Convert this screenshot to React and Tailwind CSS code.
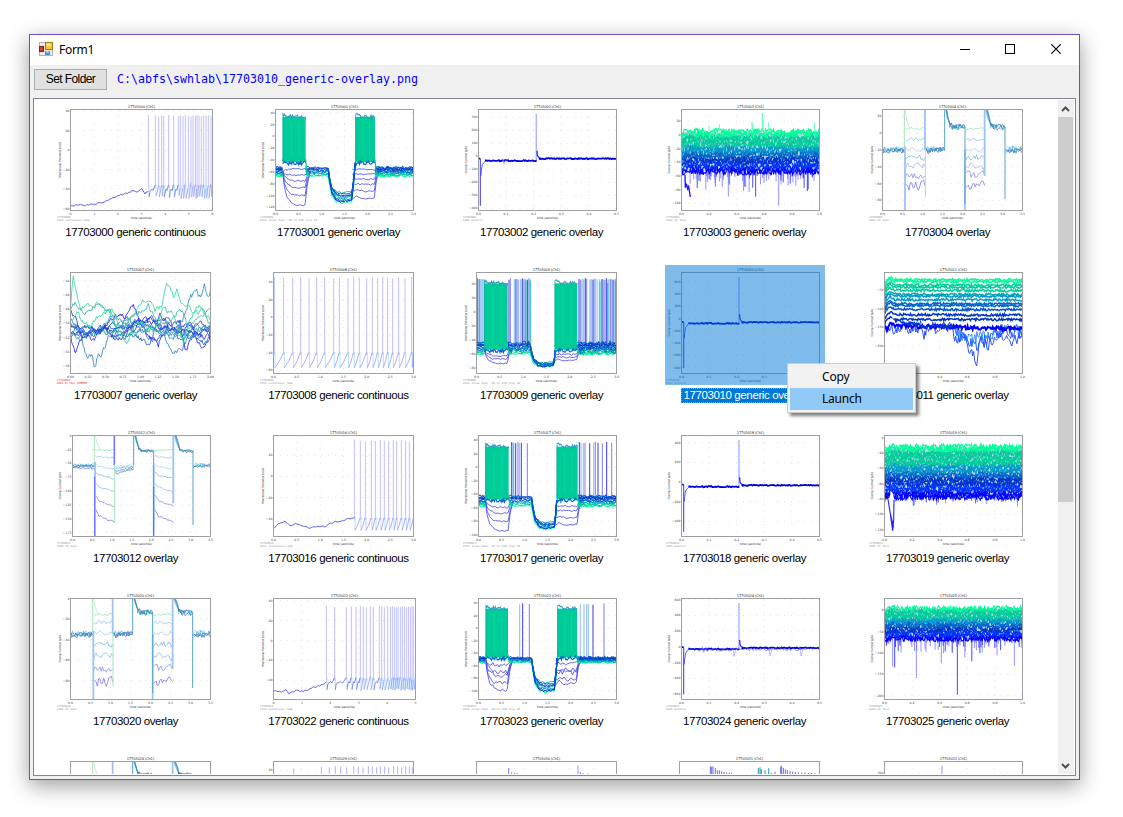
import React from "react";

const SKY = ["#0000ff", "#0033ff", "#0033cc", "#0066cc", "#0099cc", "#00cc99", "#00cc99", "#00ff99"];

// Small seeded generator, so that every thumbnail is the same on each render.
function rng(seed) {
  let a = Math.imul(seed + 11, 2654435761);
  return () => {
    a = (a + 0x6d2b79f5) | 0;
    let t = Math.imul(a ^ (a >>> 15), 1 | a);
    t = (t + Math.imul(t ^ (t >>> 7), 61 | t)) ^ t;
    return ((t ^ (t >>> 14)) >>> 0) / 4294967296;
  };
}

// Path through the knots, sampled every `step` units with noise added.
// `hold` is the share of each sample's noise that carries over to the next.
function noisy(knots, amp, step, seed, hold = 0) {
  const r = rng(seed);
  let d = "";
  let e = 0;
  for (let i = 0; i < knots.length - 1; i++) {
    const [x0, y0] = knots[i];
    const [x1, y1] = knots[i + 1];
    const n = Math.max(1, Math.round(Math.abs(x1 - x0) / step));
    for (let k = 0; k < n; k++) {
      const t = k / n;
      e = e * hold + (r() - 0.5) * 2 * amp;
      d += `${d ? "L" : "M"}${(x0 + (x1 - x0) * t).toFixed(1)} ${(y0 + (y1 - y0) * t + e).toFixed(1)}`;
    }
  }
  const last = knots[knots.length - 1];
  return `${d}L${last[0]} ${last[1]}`;
}

function Line({ d, c = "#3333ff", w = 2.4, o = 1 }) {
  return <path d={d} fill="none" stroke={c} strokeWidth={w} opacity={o} />;
}

function Trace({ p, a = 2, s = 4, seed = 1, hold = 0, ...rest }) {
  return <Line d={noisy(p, a, s, seed, hold)} {...rest} />;
}

function Firing({ pre, xs, top, base, peak, r, jitter = 0 }) {
  const g = rng(xs.length);
  const j = xs.map(() => [(g() - 0.5) * jitter, (g() - 0.5) * jitter]);
  const saw = xs
    .map((x, i) => {
      const n = i + 1 < xs.length ? xs[i + 1] : r;
      if (jitter && n - x > 12) return "";
      const b = base + j[i][0] * 0.5;
      const p = peak + j[i][1];
      return `M${x + 2} ${b}L${x + (n - x) * 0.55} ${(b + p) / 2 + 4}L${n - 1} ${p + 2}`;
    })
    .join("");
  const curve = xs
    .map((x, i) => {
      const n = i + 1 < xs.length ? xs[i + 1] : r;
      if (!jitter || n - x <= 12) return "";
      return `M${x + 2} ${base}L${x + 5} ${base - 18}L${x + (n - x) * 0.5} ${peak + 12}L${x + (n - x) * 0.7} ${peak + 16}L${n - 1} ${peak}`;
    })
    .join("");
  return (
    <>
      <Line d={xs.map((x, i) => `M${x} ${peak + 8}V${top + ((i * 7) % 5)}`).join("")} c="#c0c0ff" w={3} />
      <Line d={xs.map((x, i) => `M${x + 2} ${base + j[i][0] * 0.5}V${peak}`).join("")} c="#a9d8ff" w={2.4} />
      <Line d={saw} c="#8686f5" w={2} />
      <Line d={curve} c="#5c5cec" w={2.2} />
      {pre && <Trace p={pre} a={2.6} s={4} hold={0.4} seed={pre[0][0]} c="#4848e8" w={2.6} />}
    </>
  );
}

function Memtest({ l, r, x1, x2, left, low, mid, right, top, dips = [] }) {
  return (
    <>
      <Line d={`M${x2} ${mid}V${top}`} c="#b3b3ff" w={4.5} />
      <Line d={`M${x1} ${left}V${low}`} c="#4a4aff" w={3.4} />
      <Line d={`M${x1 + 2} ${low - 90}L${x1 + 3} ${mid + 30}L${x1 + 6} ${mid + 12}L${x1 + 14} ${mid + 2}L${x1 + 30} ${mid}`} c="#3333ff" />
      <Trace p={[[l, left], [x1, left]]} a={1} c="#0000e0" w={5} />
      <Trace p={[[x1 + 14, mid], [x2 + 1, mid]]} a={1.6} s={3} c="#0000e0" w={5.4} />
      <Line d={`M${x2 + 2} ${right - 24}L${x2 + 3} ${right - 10}L${x2 + 7} ${right - 4}L${x2 + 16} ${right}`} c="#1111ff" w={3.4} />
      <Trace p={[[x2 + 8, right], [r, right]]} a={1.6} s={3} seed={4} c="#0000e0" w={5.4} />
      {dips.map(([x, y]) => (
        <Line key={x} d={`M${x - 3} ${right}L${x} ${y}L${x + 5} ${right + 6}L${x + 14} ${right}`} c="#9a9aff" w={2} />
      ))}
    </>
  );
}

function Steps({ x, base, block, arcs, dip, spikes = [], lightSpikes = [], tall, rough = 2.5, wash = [] }) {
  const [a, b, c, d, e, f, g, h] = x;
  const out = [];
  const n = 9;
  const colors = ["#00ff99", "#00cc99", "#00cc99", "#0099cc", "#0066cc", "#0066cc", "#0033cc", "#0033cc", "#0066cc"];
  wash.forEach(([p, q], i) => out.push(<rect key={`wash${i}`} x={p} y={tall + 4} width={q - p} height={base[0] - tall} fill="#9cc6f0" opacity="0.6" />));
  arcs.forEach((y, i) => {
    const m = (base[0] + base[1]) / 2;
    const dy = y - m;
    out.push(
      <Trace key={`l${i}`} p={[[b, m], [b + 5, m + dy * 0.45], [b + 13, m + dy * 0.75], [b + 26, m + dy * 0.93], [b + 40, y], [c - 2, y], [c + 5, m + dy * 0.4], [c + 14, m]]} a={rough} s={5} seed={i + 3} c="#4242ee" w={2.4} />,
      <Trace key={`r${i}`} p={[[e, y - dy * 0.2], [e + 12, m + dy * 0.75], [f + 30, m + dy * 0.82], [g - 2, m + dy * 0.8], [g + 4, m + dy * 0.3], [g + 12, m]]} a={rough} s={5} seed={i + 13} c="#4242ee" w={2.4} />
    );
  });
  spikes.forEach((s, i) => out.push(<Line key={`s${s}`} d={`M${s} ${base[0] + 10}V${tall + (i % 3) * 2}`} c={i % 2 ? "#8484fa" : "#4646e6"} w={3.2} />));
  lightSpikes.forEach((s) => out.push(<Line key={`t${s}`} d={`M${s} ${base[0] + 10}V${tall + 3}`} c="#9cc6f0" w={3.6} />));
  for (let i = 0; i < n; i++) {
    const y = base[1] - ((base[1] - base[0]) * i) / (n - 1);
    const q = dip[1] - ((dip[1] - dip[0]) * ((i * 4) % n)) / (n - 1);
    const col = colors[i];
    out.push(
      <Trace key={`b${i}`} p={[[a, y], [b, y]]} a={3} s={3} seed={i} c={col} w={3.2} />,
      <Trace key={`c${i}`} p={[[c, y - 4], [c + 6, y], [d, y], [d + 4, y + (q - y) * 0.35], [d + 11, y + (q - y) * 0.75], [d + 24, y + (q - y) * 0.95], [d + 40, q], [e - 2, q - 3], [e + 2, y + (q - y) * 0.6], [f, block[1]]]} a={2.8} s={4} seed={i + 20} c={col} w={3} />,
      <Trace key={`d${i}`} p={[[g, y], [h, y]]} a={3.2} s={3} seed={i + 40} c={col} w={3.2} />
    );
  }
  [[b, c], [f, g]].forEach(([p, q], i) => {
    out.push(
      <rect key={`k${i}`} x={p} y={block[0] + 6} width={q - p} height={block[1] - block[0] - 8} fill="#00cc99" />,
      <Trace key={`u${i}`} p={[[p, block[0] - 2], [p + 20, block[0] + 4], [q, block[0] + 6]]} a={5} s={3} seed={i + 60} c="#2d9fc4" w={3.4} />,
      <Trace key={`v${i}`} p={[[p, block[1]], [q, block[1]]]} a={7} s={2.5} seed={i + 70} c="#0066cc" w={3.4} />,
      <Trace key={`w${i}`} p={[[p, block[1] - 12], [q, block[1] - 12]]} a={6} s={2.5} seed={i + 80} c="#00cc99" w={5} />,
      <Line key={`x${i}`} d={[0.38, 0.72].map((t) => `M${p + (q - p) * t} ${block[1] - 22}V${block[0] + 22}`).join("")} c="#10e49a" w={1.6} />,
      <Line key={`y${i}`} d={`M${p + 1} ${block[1]}V${block[0]}`} c="#159fb0" w={2.4} />,
      <Line key={`z${i}`} d={`M${q} ${block[1] - 10}L${q + 4} ${base[1] - 6}L${q + 12} ${base[1]}`} c="#00cc99" w={3.4} />
    );
  });
  return out;
}

function Clamp({ x, top, bottom, base, high, steps, drift = 0, post = 0, amp = 9 }) {
  const [a, b, c, d, e, f, g, h] = x;
  const cols = ["#99e6b8", "#9ccbee", "#b4d3ea", "#86bbee", "#98c0f4", "#8f94ee", "#7e7cec"];
  const out = [];
  steps.forEach((y, i) => {
    const dr = drift * i * 1.2;
    const rough = drift ? 2.5 : 4 + i * 1.6;
    out.push(
      <Trace key={`p${i}`} p={[[b + 3, y - dr], [b + 14, y - dr * 0.3], [c, y + dr * 0.4]]} a={rough} s={4} hold={0.3} seed={i * 7 + 5} c={cols[i]} w={2.5} />,
      <Trace key={`q${i}`} p={[[e + 3, y - dr], [e + 14, y - dr * 0.3], [f, y + dr * 0.4]]} a={rough} s={4} hold={0.3} seed={i * 7 + 77} c={cols[i]} w={2.5} />
    );
  });
  out.push(<Line key="g" d={`M${b + 2} ${top}L${b + 7} ${steps[0] - 24}L${b + 17} ${steps[0]}`} c="#a9e9bd" w={2} />);
  ["#a9d5f5", "#4fb2d6", "#5f72d8", "#2f93a8"].forEach((col, i) => {
    const y = base + (i - 1.5) * 2;
    const k = post * (i + 1) * 0.25;
    out.push(
      <Trace key={`a${i}`} p={[[a, y], [b, y + 1]]} a={amp} s={3.4} seed={i + 1} c={col} w={2.4} />,
      <Trace key={`b${i}`} p={[[c + 2, y + k], [d, y + k * 0.4]]} a={post ? 2 : amp} s={3.4} seed={i + 7} c={col} w={2.4} />,
      <Line key={`s${i}`} d={`M${d + 3 + i} ${top}L${d + 7 + i} ${high - 28}L${d + 16} ${high - 6}`} c={col} w={2.4} />,
      <Trace key={`c${i}`} p={[[d + 14, high - 5], [d + 24, high], [e, high + 2]]} a={amp} s={3.4} seed={i + 31} c={col} w={2.4} />,
      <Line key={`t${i}`} d={`M${f + 2 + i * 2} ${top}L${f + 9 + i * 2} ${high - 24}L${f + 19} ${high - 4}`} c={col} w={2.4} />,
      <Trace key={`d${i}`} p={[[f + 17, high - 3], [f + 24, high], [g, high + 3]]} a={amp} s={3.4} seed={i + 41} c={col} w={2.4} />,
      <Trace key={`e${i}`} p={[[g + 2, y + 4], [g + 10, y], [h, y]]} a={amp} s={3.4} seed={i + 51} c={col} w={2.4} />
    );
  });
  const low = bottom - 50;
  out.push(
    <Line key="v1" d={`M${b} ${top}V${base}M${c + 1} ${base}V${low + 10}`} c="#a9e6b8" w={3} />,
    <Line key="v2" d={`M${b + 2} ${base - 10}V${bottom}M${c} ${top}V${base}M${e} ${base}V${bottom}M${f} ${top}V${steps[5]}`} c="#9cc4f2" w={5.4} />,
    <Line key="v3" d={`M${e} ${high}V${bottom - 20}M${d} ${top}V${base}M${g} ${high}V${low + 15}`} c="#56a5c8" w={3} />
  );
  return out;
}

function Bands({ l, r, rows, amp, dips = [], seed = 1, fill, w = 3.4 }) {
  return (
    <>
      {fill && <rect x={l} y={fill[0]} width={r - l} height={fill[1] - fill[0]} fill="#0080b8" opacity="0.3" />}
      {dips.map(([x, y], i) => (
        <Line key={i} d={`M${x} ${rows[0][0] - 8}V${y}`} c={i % 3 ? "#8a8aff" : "#3a3aff"} w={2.8} />
      ))}
      {rows.map(([y, c], i) => (
        <Trace key={i} p={[[l, y + 6], [l + 12, y], [l + 26, y - 4], [l + 32, y], [r, y]]} a={amp} s={2.2} seed={seed + i} c={c} w={w} />
      ))}
    </>
  );
}

const ramp = (y0, y1, n) =>
  Array.from({ length: n }, (_, i) => [y1 - ((y1 - y0) * i) / (n - 1), SKY[Math.min(7, Math.floor((i / n) * 8))]]);

const scatter = (l, r, base, depth, n, seed) => {
  const g = rng(seed);
  return Array.from({ length: n }, () => [l + g() * (r - l), base + g() * g() * depth]);
};

function Walks() {
  const green = [
    [[122, 145], [130, 66], [140, 120], [152, 158], [175, 150], [200, 142], [225, 160], [247, 165], [265, 205], [285, 215], [310, 180], [335, 140], [360, 135], [375, 165], [395, 155], [410, 85], [420, 95], [430, 125], [440, 105], [455, 140], [470, 150], [490, 178], [515, 170], [541, 195]],
    [[122, 200], [140, 170], [160, 205], [185, 215], [205, 185], [235, 170], [260, 215], [290, 265], [315, 210], [340, 205], [370, 235], [400, 160], [430, 178], [460, 265], [480, 190], [510, 150], [541, 210]],
    [[122, 165], [135, 145], [165, 180], [200, 150], [240, 160], [255, 210], [300, 190], [330, 170], [355, 150], [380, 195], [420, 205], [450, 155], [475, 215], [505, 185], [541, 160]],
  ];
  const blue = [
    [[122, 190], [150, 220], [165, 290], [170, 310], [185, 300], [195, 338], [205, 290], [215, 305], [235, 250], [260, 230], [285, 245], [310, 215], [340, 225], [370, 250], [400, 240], [430, 290], [460, 275], [490, 210], [541, 225]],
    [[122, 250], [135, 285], [150, 265], [175, 240], [205, 225], [245, 195], [265, 180], [285, 185], [310, 155], [330, 200], [355, 240], [385, 270], [415, 205], [450, 200], [465, 290], [490, 240], [541, 250]],
    [[122, 165], [140, 195], [155, 240], [190, 255], [225, 215], [265, 260], [295, 215], [335, 195], [365, 190], [400, 215], [435, 225], [460, 235], [480, 195], [505, 265], [525, 280], [541, 235]],
    [[122, 250], [150, 235], [190, 235], [220, 225], [250, 250], [280, 235], [330, 250], [360, 265], [390, 185], [420, 200], [450, 260], [475, 245], [500, 250], [530, 270], [541, 240]],
    [[122, 200], [160, 235], [200, 240], [240, 190], [280, 200], [320, 235], [350, 205], [390, 230], [430, 250], [460, 190], [482, 125], [500, 112], [512, 125], [523, 95], [532, 130], [541, 108]],
  ];
  return (
    <>
      {blue.map((p, i) => (
        <Trace key={i} p={p} a={8} s={2.8} hold={0.55} seed={i + 3} c={["#2f7fbf", "#2222ee", "#2a2ae8", "#1d5fc4", "#2f8fc4"][i]} w={2.5} />
      ))}
      {[0, 1, 2, 3, 4].map((i) => (
        <Trace key={`z${i}`} p={[[122, 240 - i * 8], [240, 222], [330, 215 - i * 6], [430, 225], [541, 215 + i * 7]]} a={8} s={3} hold={0.88} seed={i * 5 + 93} c={["#2aa0a8", "#1a2fe0", "#2a6fd0", "#38a8b0", "#1133dd"][i]} w={2.4} />
      ))}
      {green.map((p, i) => (
        <Trace key={`g${i}`} p={p} a={7} s={3} hold={0.5} seed={i + 30} c={["#2fd99c", "#22d890", "#3fb0ac"][i]} w={2.5} />
      ))}
    </>
  );
}

const MV = "Membrane Potential (mV)";
const PA = "Clamp Current (pA)";

// Frame, ticks, grid and captions around a recording.
// A `cut` plot shows only its top edge, so it carries no lower captions.
function Plot({ id, vx, vy, l = 43.5, r = 463.5, xs, ys, unit, note, noteLen = 60, alert, cut, children }) {
  const L = vx + l;
  const R = vx + r;
  const T = vy + 22.5;
  const B = vy + 325.5;
  const mid = (L + R) / 2;
  return (
    <svg width="160" height={cut ? 20 : 120} viewBox={`${vx} ${vy} 480 ${cut ? 60 : 360}`} className="block">
      <g stroke="#d6d6d6" strokeWidth="2.4" strokeDasharray="2.5 18">
        {xs.slice(1, -1).map((t, i) => (
          <path key={t} d={`M${L + ((R - L) * (i + 1)) / (xs.length - 1)} ${T}V${B}`} />
        ))}
        {ys.map(([y]) => (
          <path key={y} d={`M${L} ${y}H${R}`} />
        ))}
      </g>
      <clipPath id={`clip${id}`}>
        <rect x={L} y={T} width={R - L + 1} height={B - T} />
      </clipPath>
      <g clipPath={`url(#clip${id})`}>{children}</g>
      <rect x={L} y={T} width={R - L} height={B - T} fill="none" stroke="#a0a0a0" strokeWidth="3" />
      <g fontFamily="DejaVu Sans, sans-serif" fill="#333">
        <text x={mid} y={T - 5.5} fontSize="11" textAnchor="middle" textLength="82">{`${id} (Ch1)`}</text>
        <g fontSize="9.5" fill="#444">
          {!cut &&
            xs.map((t, i) => (
              <text key={t} x={L + ((R - L) * i) / (xs.length - 1)} y={B + 12} textAnchor="middle">{t}</text>
            ))}
          {ys.map(([y, t]) => (
            <text key={t} x={L - 3} y={y + 3} textAnchor="end">{t}</text>
          ))}
        </g>
        {!cut && (
          <>
            <text x={mid} y={B + 24} fontSize="9" textAnchor="middle" textLength="64">time (seconds)</text>
            <text transform={`translate(${vx + 15} ${T + 151}) rotate(-90)`} fontSize="9" textAnchor="middle" textLength={unit === MV ? 108 : 82}>{unit}</text>
          </>
        )}
      </g>
      {!cut && (
        <g fontFamily="DejaVu Sans Mono, monospace" fontSize="8" fill={alert ? "#ff2020" : "#8f8f8f"}>
          <text x={vx + 3} y={vy + 348} textLength="40">{id}</text>
          <text x={vx + 3} y={vy + 357} textLength={noteLen}>{note}</text>
        </g>
      )}
    </svg>
  );
}

const T3 = ["0.0", "0.5", "1.0", "1.5", "2.0", "2.5", "3.0"];
const T35 = [...T3, "3.5"];
const T1 = ["0.0", "0.2", "0.4", "0.6", "0.8", "1.0"];
const T5 = ["0.0", "0.1", "0.2", "0.3", "0.4", "0.5"];
const cont = { unit: MV, note: "8112 continuous ramp", noteLen: 98 };
const dual = { unit: MV, note: "8112 steps dual -50 to 250 step 10", noteLen: 171 };
const mem = { unit: PA, note: "8201 memtest", xs: T5, l: 49.5 };
const fast = { unit: PA, note: "8202 IV fast", xs: T1, l: 49.5 };
const iv = { unit: PA, note: "8202 IV dual", xs: T35 };
const axis = (top, step, labels) => labels.map((t, i) => [top + step * i, t]);

const gc = "generic continuous";
const go = "generic overlay";

const items = [
  { id: "17703000", kind: gc, plot: (
    <Plot id="17703000" vx={108} vy={231} r={469.5} xs={["0", "1", "2", "3", "4", "5", "6"]} ys={axis(258, 58.5, ["40", "20", "0", "−20", "−40", "−60"])} {...cont}>
      <Firing r={578} top={270} base={517} peak={480} jitter={18} pre={[[152, 541], [185, 540], [225, 538], [262, 527], [290, 514], [320, 505], [342, 495], [355, 499], [365, 491], [375, 505], [385, 498]]}
        xs={[385, 406, 416, 425, 431, 446, 461, 475, 481, 489, 496, 505, 513, 519, 526, 531, 537, 544, 551, 558, 565, 573]} />
    </Plot>) },
  { id: "17703001", kind: go, plot: (
    <Plot id="17703001" vx={717} vy={231} l={49.5} xs={T3} ys={axis(263, 35.5, ["40", "20", "0", "−20", "−40", "−60", "−80", "−100", "−120"])} {...dual}>
      <Steps x={[767, 788, 857, 925, 997, 1006, 1065, 1181]} base={[427, 453]} block={[270, 413]} arcs={[540, 512, 488, 468, 450, 432]} dip={[503, 534]} />
    </Plot>) },
  { id: "17703002", kind: go, plot: (
    <Plot id="17703002" vx={66} vy={21} ys={axis(67, 39, ["300", "200", "100", "0", "−100", "−200", "−300", "−400"])} {...mem}>
      <Memtest l={115} r={530} x1={121} x2={289} left={191} low={332} mid={197} right={191} top={57} dips={[[192, 208]]} />
    </Plot>) },
  { id: "17703003", kind: go, plot: (
    <Plot id="17703003" vx={675} vy={21} ys={axis(79, 41, ["20", "0", "−20", "−40", "−60", "−80", "−100"])} {...fast}>
      <Bands l={725} r={1139} rows={ramp(110, 230, 16)} amp={9.5} seed={3} fill={[112, 228]} dips={[...scatter(727, 1139, 240, 60, 80, 5), [865, 305], [947, 305], [1016, 332], [826, 276], [1102, 288]]} />
      <Line d="M936 110V82L939 110M967 110V54L970 108M985 108V82M838 110V88M1124 110V82M807 110V92" c="#5effb5" w={3} />
      <Line d="M735 240L736 278L739 266L743 282L746 275L751 306" c="#1010ff" w={4} />
    </Plot>) },
  { id: "17703004", kind: "overlay", plot: (
    <Plot id="17703004" vx={84} vy={231} ys={axis(274, 50.4, ["20", "0", "−20", "−40", "−60", "−80"])} {...iv}>
      <Clamp x={[127, 193, 255, 314, 375, 434, 495, 548]} top={253} bottom={557} base={374} high={305} steps={[310, 343, 373, 398, 425, 452, 482]} />
    </Plot>) },
  { id: "17703007", kind: go, plot: (
    <Plot id="17703007" vx={78} vy={30} unit={MV} note="8201 IC fast COMMENT" noteLen={92} alert xs={["0.00", "0.25", "0.50", "0.75", "1.00", "1.25", "1.50", "1.75", "2.00"]} ys={axis(77, 42.7, ["−44", "−46", "−48", "−50", "−52", "−54", "−56"])}>
      <Walks />
    </Plot>) },
  { id: "17703008", kind: gc, plot: (
    <Plot id="17703008" vx={687} vy={30} xs={T3} ys={axis(81, 53, ["40", "20", "0", "−20", "−40", "−60"])} {...cont}>
      <Firing r={1151} top={66} base={338} peak={291} xs={[733, 761, 788, 812, 837, 860, 884, 911, 928, 954, 971, 988, 1010, 1027, 1043, 1058, 1073, 1088, 1106, 1125, 1145]} />
    </Plot>) },
  { id: "17703009", kind: go, plot: (
    <Plot id="17703009" vx={66} vy={30} xs={T3} ys={axis(88, 42, ["40", "20", "0", "−20", "−40", "−60", "−80"])} {...dual}>
      <Steps x={[109, 132, 203, 271, 342, 344, 412, 530]} base={[264, 297]} block={[79, 286]} arcs={[325, 313, 303]} dip={[324, 336]} tall={70}
        wash={[[110, 131], [224, 236], [244, 270], [424, 434], [448, 464], [482, 530]]}
        spikes={[112, 119, 207, 211, 228, 234, 247, 255, 262, 267, 417, 421, 436, 440, 459, 465, 486, 492, 499, 512, 519, 528]}
        lightSpikes={[115, 123, 128, 223, 231, 241, 251, 270, 426, 431, 450, 455, 471, 478, 506, 515, 524]} />
      <Line d="M258 270V78M271 272V76M480 265V80M503 268V84M527 270V78" c="#25c9a0" w={3} />
      {[0, 1, 2].map((i) => (
        <g key={i}>
          <Trace p={[[204, 275 + i * 5], [271, 272 + i * 5]]} a={16} s={5} seed={i + 4} c={["#0033cc", "#0066cc", "#00aa99"][i]} />
          <Trace p={[[412, 278 + i * 4], [530, 272 + i * 6]]} a={16} s={5} seed={i + 9} c={["#0033cc", "#0066cc", "#00aa99"][i]} />
        </g>
      ))}
    </Plot>) },
  { id: "17703010", kind: go, selected: true, plot: (
    <Plot id="17703010" vx={675} vy={30} ys={axis(80, 36.9, ["600", "400", "200", "0", "−200", "−400", "−600", "−800"])} {...mem}>
      <Memtest l={725} r={1139} x1={731} x2={897} left={201} low={340} mid={205} right={202} top={66} />
    </Plot>) },
  { id: "17703011", kind: go, plot: (
    <Plot id="17703011" vx={264} vy={30} ys={axis(105, 56, ["−50", "−100", "−150", "−200"])} {...fast}>
      {[74, 79, 90, 96, 106, 118, 123, 134, 146, 151, 163, 179, 193].map((y, i) => (
        <Trace key={y} p={[[314, y + 14], [322, y - 2], [331, y - 8], [342, y], [728, y + 1]]} a={3.6} s={2.6} seed={i * 3 + 2} w={4.4}
          c={["#00ff99", "#00ff99", "#00cc99", "#00cc99", "#00cc99", "#00a8b0", "#0099cc", "#0099cc", "#0066cc", "#0066cc", "#0055cc", "#0033cc", "#0033bb"][i]} />
      ))}
      <Trace p={[[314, 210], [341, 230], [348, 215], [425, 218], [432, 235], [440, 218], [518, 213], [524, 245], [542, 255], [555, 250], [566, 290], [578, 300], [590, 308], [600, 262], [625, 275], [640, 262], [655, 235], [680, 245], [708, 255], [728, 230]]} a={19} s={3} hold={0.3} seed={29} c="#2244ff" w={2.8} />
      <Trace p={[[518, 210], [525, 235], [570, 260], [590, 275], [620, 250], [660, 228], [728, 238]]} a={20} s={3} hold={0.3} seed={39} c="#1155ff" w={2.8} />
      <Trace p={[[518, 210], [528, 232], [560, 245], [600, 245], [640, 238], [660, 225], [728, 225]]} a={18} s={3} seed={49} c="#1177ee" w={2.4} />
      <Trace p={[[314, 215], [322, 225], [330, 205], [345, 212], [728, 222]]} a={6} s={2.5} seed={8} c="#0000ff" w={6} />
      <Trace p={[[345, 196], [380, 205], [450, 215], [520, 214]]} a={5} s={2.5} seed={18} c="#0033cc" w={4.5} />
      <ellipse cx="335" cy="196" rx="6" ry="6" fill="#fff" />
    </Plot>) },
  { id: "17703012", kind: "overlay", plot: (
    <Plot id="17703012" vx={78} vy={24} l={49.5} ys={axis(47, 41.5, ["0", "−25", "−50", "−75", "−100", "−125", "−150", "−175"])} {...iv}>
      <Clamp x={[127, 193, 253, 311, 371, 430, 489, 542]} top={46} bottom={350} base={136} high={92} steps={[90, 112, 142, 170, 208, 250, 296]} drift={4} post={22} amp={4} />
      <Line d="M253 46V135M194 170V350M371 200V350" c="#6666ff" w={3} />
      <Trace p={[[127, 143], [193, 145]]} a={2.5} c="#7777f0" w={2.4} />
    </Plot>) },
  { id: "17703016", kind: gc, plot: (
    <Plot id="17703016" vx={687} vy={24} xs={T3} ys={axis(106, 63.3, ["20", "0", "−20", "−40"])} {...cont}>
      <Firing r={1151} top={60} base={331} peak={292} pre={[[733, 325], [748, 310], [765, 306], [780, 316], [800, 310], [820, 320], [840, 326], [860, 319], [885, 321], [905, 309], [925, 304], [945, 300], [960, 296], [973, 292]]}
        xs={[973, 991, 1006, 1024, 1036, 1051, 1063, 1076, 1090, 1100, 1114, 1127, 1138]} />
    </Plot>) },
  { id: "17703017", kind: go, plot: (
    <Plot id="17703017" vx={66} vy={24} l={49.5} xs={T3} ys={axis(61, 40.4, ["40", "20", "0", "−20", "−40", "−60", "−80", "−100"])} {...dual}>
      <Steps x={[115, 136, 206, 275, 345, 350, 413, 530]} base={[228, 258]} block={[74, 240]} arcs={[332, 305, 280, 262]} dip={[308, 328]} tall={66}
        spikes={[215, 221, 227, 234, 244, 262, 418, 435, 449, 466, 474, 487, 500, 515, 530]} lightSpikes={[218, 238, 423, 430, 461]} />
    </Plot>) },
  { id: "17703018", kind: go, plot: (
    <Plot id="17703018" vx={675} vy={24} ys={axis(68, 59, ["400", "200", "0", "−200", "−400"])} {...mem}>
      <Memtest l={725} r={1139} x1={731} x2={897} left={194} low={335} mid={200} right={196} top={60} />
    </Plot>) },
  { id: "17703019", kind: go, plot: (
    <Plot id="17703019" vx={114} vy={24} ys={axis(53, 46, ["0", "−20", "−40", "−60", "−80", "−100", "−120"])} {...fast}>
      <Bands l={164} r={578} rows={ramp(80, 232, 22)} amp={8.5} seed={33} fill={[82, 232]} dips={scatter(196, 578, 236, 25, 50, 8)} />
      <path d="M176 240L184 214L190 222L192 300L187 285Z" fill="#fff" />
      <Line d="M174 238L180 275L188 332L191 300L192 240M182 285L191 322" c="#2222ff" w={3.4} />
    </Plot>) },
  { id: "17703020", kind: "overlay", plot: (
    <Plot id="17703020" vx={78} vy={18} ys={axis(41, 61.4, ["0", "−20", "−40", "−60", "−80"])} {...iv}>
      <Clamp x={[121, 188, 248, 308, 368, 428, 488, 543]} top={40} bottom={344} base={147} high={82} steps={[88, 112, 143, 178, 214, 252, 290]} />
    </Plot>) },
  { id: "17703022", kind: gc, plot: (
    <Plot id="17703022" vx={687} vy={18} r={469.5} xs={["0", "1", "2", "3", "4", "5"]} ys={axis(47, 59.8, ["40", "20", "0", "−20", "−40"])} {...cont}>
      <Firing r={1157} top={63} base={314} peak={278} jitter={12} pre={[[732, 320], [760, 320], [768, 312], [776, 325], [795, 318], [820, 320], [840, 310], [862, 306], [880, 298], [889, 290]]}
        xs={[889, 914, 949, 964, 978, 991, 1000, 1009, 1021, 1030, 1048, 1055, 1063, 1073, 1081, 1087, 1093, 1099, 1104, 1111, 1117, 1123, 1129, 1135, 1141, 1146, 1151]} />
    </Plot>) },
  { id: "17703023", kind: go, plot: (
    <Plot id="17703023" vx={66} vy={18} l={49.5} xs={T3} ys={axis(55, 37.4, ["40", "20", "0", "−20", "−40", "−60", "−80", "−100"])} {...dual}>
      <Steps x={[115, 137, 204, 275, 345, 352, 411, 530]} base={[217, 232]} block={[65, 219]} arcs={[314, 296, 272, 262, 240]} dip={[293, 322]} tall={55} rough={7} spikes={[248, 268, 459, 492]} lightSpikes={[239, 421, 432, 440, 445]} />
    </Plot>) },
  { id: "17703024", kind: go, plot: (
    <Plot id="17703024" vx={675} vy={18} ys={axis(44, 47.2, ["600", "400", "200", "0", "−200", "−400", "−600"])} {...mem}>
      <Memtest l={725} r={1139} x1={731} x2={897} left={187} low={328} mid={192} right={189} top={54} dips={[[790, 203], [882, 214], [990, 213], [1083, 213]]} />
      <Trace p={[[745, 195], [1139, 192]]} a={5} s={4} seed={6} c="#5a5aff" w={1.8} />
    </Plot>) },
  { id: "17703025", kind: go, plot: (
    <Plot id="17703025" vx={114} vy={513} ys={axis(571, 64, ["0", "−50", "−100", "−150", "−200"])} {...fast}>
      <Bands l={164} r={578} rows={ramp(565, 657, 15)} amp={8} seed={53} fill={[566, 655]} dips={[...scatter(166, 578, 660, 65, 95, 15), [259, 774], [382, 824], [553, 738], [188, 740], [194, 742], [334, 730]]} />
    </Plot>) },
  { id: "17703026", kind: "overlay", plot: (
    <Plot id="17703026" vx={78} vy={507} ys={[]} cut {...iv}>
      <Clamp x={[121, 188, 248, 308, 368, 428, 488, 543]} top={529} bottom={833} base={636} high={571} steps={[575, 602, 632, 667, 703, 741, 779]} />
    </Plot>) },
  { id: "17703029", kind: gc, plot: (
    <Plot id="17703029" vx={687} vy={507} xs={["0", "1", "2", "3", "4", "5"]} ys={[[556, "20"]]} cut {...cont}>
      <Line d={[791, 874, 898, 916, 932, 950, 971, 985, 999, 1015, 1027, 1040, 1051, 1064, 1076, 1091, 1103, 1115, 1127, 1138, 1147].map((x, i) => `M${x} 640V${i === 0 ? 550 : 543 + (i % 3) * 2}`).join("")} c="#b4b4ff" w={3} />
    </Plot>) },
  { id: "17703030", kind: go, plot: (
    <Plot id="17703030" vx={66} vy={507} xs={T3} ys={[]} cut {...dual}>
      <Line d="M206 640V549M215 640V562M223 640V564M231 640V564M421 640V561M429 640V564M444 640V565" c="#6666f5" w={2.6} />
      <Line d="M414 640V541" c="#b9b9ff" w={4.5} />
    </Plot>) },
  { id: "17703031", kind: go, plot: (
    <Plot id="17703031" vx={675} vy={507} xs={T3} ys={[]} cut {...dual}>
      <Line d={[811, 815, 819, 826, 832, 838, 845, 852, 860, 868, 875, 1022, 1025, 1030, 1036, 1042, 1050, 1058, 1066, 1075, 1085, 1095, 1105, 1115, 1125].map((x, i) => `M${x} 640V${[544, 545, 544, 550, 556, 556, 559, 561, 563, 563, 563, 545, 542, 549, 553, 555, 558, 560, 561, 562, 563, 563, 564, 564, 565][i]}`).join("")} c="#6b6bf2" w={3} />
      <Line d="M955 640V549M960 640V547M964 640V553M975 640V556M986 640V550M994 640V563M1005 640V560" c="#39a6b8" w={3.4} />
    </Plot>) },
  { id: "17703032", kind: go, plot: (
    <Plot id="17703032" vx={24} vy={57} ys={[[114, "300"]]} cut {...mem}>
      <Line d="M246 200V92" c="#c4c4ff" w={5.4} />
    </Plot>) },
];

const LAST_ROW = 20;

function Thumbnail({ id, kind, selected, plot, cut }) {
  if (cut) return <li className="h-[20px] w-[160px]">{plot}</li>;
  return (
    <li className="flex h-[163px] w-[160px] flex-col items-center">
      <div className="relative h-[120px] w-[160px]">
        {plot}
        {selected && <div className="absolute inset-0 bg-[#0078d7]/50" />}
      </div>
      <span
        className={
          selected
            ? "mt-[3px] h-[15px] border border-dotted border-[#ff8728] bg-[#0078d7] px-[2px] text-[11.5px] leading-[13px] tracking-[-0.39px] whitespace-nowrap text-white"
            : "mt-[3px] h-[15px] pr-[4px] pl-[3px] text-[11.5px] leading-[15px] tracking-[-0.39px] whitespace-nowrap text-black"
        }
      >
        {id} {kind}
      </span>
    </li>
  );
}

function AppIcon() {
  return (
    <svg width="14" height="14" viewBox="0 0 14 14" className="mb-[2px] block">
      <rect x="0.5" y="0.5" width="13" height="13" fill="#ececec" stroke="#b4b4b4" />
      <rect x="6.5" y="0.5" width="7" height="7" fill="#f7c52f" stroke="#a87c10" />
      <rect x="7.5" y="1.5" width="4" height="3" fill="#ffe48a" />
      <rect x="0.5" y="4.5" width="4" height="5" fill="#d8402c" stroke="#98180e" />
      <rect x="6" y="9" width="5" height="4" fill="#4f8fe0" />
      <rect x="7" y="9" width="3" height="2" fill="#9cc4f5" />
    </svg>
  );
}

function CaptionButtons() {
  return (
    <div className="flex h-full pb-[2px] text-black">
      <span className="flex w-[46px] items-center justify-center">
        <svg width="10" height="10" viewBox="0 0 10 10" shapeRendering="crispEdges"><path d="M0 5.5H10" stroke="currentColor" /></svg>
      </span>
      <span className="flex w-[44px] items-center justify-center">
        <svg width="10" height="10" viewBox="0 0 10 10" shapeRendering="crispEdges"><rect x="0.5" y="0.5" width="9" height="9" fill="none" stroke="currentColor" /></svg>
      </span>
      <span className="flex w-[47px] items-center justify-center pl-[1px]">
        <svg width="10" height="10" viewBox="0 0 10 10"><path d="M0.3 0.3L9.7 9.7M9.7 0.3L0.3 9.7" fill="none" stroke="currentColor" strokeWidth="1.2" /></svg>
      </span>
    </div>
  );
}

function ScrollBar() {
  return (
    <div className="flex w-[16px] shrink-0 flex-col bg-[#f0f0f0]">
      <div className="flex h-[17px] items-center justify-center pr-[1px]">
        <svg width="9" height="6" viewBox="0 0 9 6"><path d="M1 5L4.5 1.5L8 5" fill="none" stroke="#505050" strokeWidth="2" /></svg>
      </div>
      <div className="h-[385px] w-[15px] bg-[#cdcdcd]" />
      <div className="grow" />
      <div className="flex h-[17px] items-center justify-center pr-[1px]">
        <svg width="9" height="6" viewBox="0 0 9 6"><path d="M1 1L4.5 4.5L8 1" fill="none" stroke="#505050" strokeWidth="2" /></svg>
      </div>
    </div>
  );
}

function ContextMenu() {
  return (
    <div className="absolute top-[363px] left-[787px] h-[50px] w-[129px] border border-[#cccccc] bg-[#f2f2f2] p-[2px] text-[12px] tracking-[-0.2px] text-black shadow-[3px_3px_3px_rgba(0,0,0,0.5)]" style={{ fontFamily: "'Noto Sans', sans-serif" }}>
      <div className="flex h-[22px] items-center pl-[32px]">Copy</div>
      <div className="flex h-[22px] w-[123px] items-center bg-[#91c9f7] pl-[32px]">Launch</div>
    </div>
  );
}

export default function App() {
  return (
    <div className="relative h-[817px] w-[1123px] overflow-hidden bg-white pt-[34px] pl-[29px]" style={{ fontFamily: "'Liberation Sans', sans-serif" }}>
      <div className="flex h-[746px] w-[1051px] flex-col border border-[#6f4fc8] bg-[#f0f0f0] shadow-[0_6px_20px_rgba(0,0,0,0.38)]">
        <header className="flex h-[30px] shrink-0 items-center justify-between bg-white pl-[9px]">
          <div className="flex items-center gap-[6px]">
            <AppIcon />
            <span className="text-[12px] tracking-[-0.3px] text-black" style={{ fontFamily: "'Noto Sans', sans-serif" }}>Form1</span>
          </div>
          <CaptionButtons />
        </header>
        <div className="flex h-[33px] shrink-0 items-start pt-[4px] pl-[4px]">
          <button className="h-[21px] w-[73px] border border-[#adadad] bg-[#e1e1e1] text-[12px] leading-[19px] tracking-[-0.6px] text-black">Set Folder</button>
          <span className="ml-[10px] text-[11.63px] leading-[20px] whitespace-nowrap text-[#0000ff]" style={{ fontFamily: "'DejaVu Sans Mono', monospace" }}>
            C:\abfs\swhlab\17703010_generic-overlay.png
          </span>
        </div>
        <main className="ml-[3px] flex h-[678px] w-[1043px] shrink-0 border border-[#828790] bg-white p-[1px]">
          <ul className="grid h-[674px] grow grid-cols-[repeat(5,160px)] content-start gap-x-[43px] overflow-hidden pt-[2px] pl-[21px]">
            {items.map((it, i) => (
              <Thumbnail key={it.id} {...it} cut={i >= LAST_ROW} />
            ))}
          </ul>
          <ScrollBar />
        </main>
      </div>
      <ContextMenu />
    </div>
  );
}
